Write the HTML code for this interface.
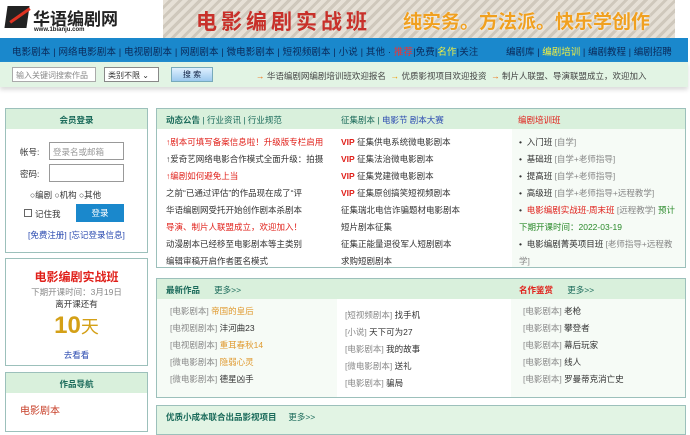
<!DOCTYPE html><html><head><meta charset="utf-8"><style>
*{margin:0;padding:0;box-sizing:border-box}
body{width:690px;height:421px;overflow:hidden;background:#fff;font-family:"Liberation Sans","Noto Sans CJK SC",sans-serif;font-size:8.5px;color:#333;position:relative}
.a{position:absolute}
.box{position:absolute;border:1px solid #9cc0bb;background:#fff}
.hd{position:absolute;left:0;right:0;top:0;height:20px;background:#d9f0dc}
.l{position:absolute;white-space:nowrap;font-size:8.5px}
.r{color:#e0201a}.g{color:#888}.o{color:#e09a30}.gr{color:#2a8a2a}.b{color:#2a4ab0}.t{color:#1a6a5a}
</style></head><body>
<div class="a" style="left:0;top:0;width:163px;height:38px;background:#fff">
<div class="a" style="left:6px;top:6px;width:22px;height:22px;background:#222;transform:skewX(-8deg)"></div>
<div class="a" style="left:8px;top:14px;width:24px;height:3px;background:#d32;transform:rotate(-35deg)"></div>
<div class="l" style="left:33px;top:5px;font-size:17px;font-weight:bold;color:#222">华语编剧网</div>
<div class="l" style="left:34px;top:27px;font-size:6px;font-weight:bold;color:#222">www.1bianju.com</div>
</div>
<div class="a" style="left:163px;top:0;width:512px;height:38px;background:repeating-linear-gradient(135deg,#e6e0d6 0 4px,#cfc8bc 4px 7px)"></div>
<div class="l" style="left:196px;top:6px;font-size:21px;font-weight:bold;color:#c8302a;letter-spacing:4px">电影编剧实战班</div>
<div class="l" style="left:403px;top:7px;font-size:19px;font-weight:bold;color:#f0a020;text-shadow:0 0 2px #fff">纯实务。方法派。快乐学创作</div>
<div class="a" style="left:0;top:38px;width:688px;height:24px;background:#1a88cc"></div>
<div class="l" style="left:12px;top:44px;font-size:9.5px;color:#0a2a5a;letter-spacing:0.1px">电影剧本 | 网络电影剧本 | 电视剧剧本 | 网剧剧本 | 微电影剧本 | 短视频剧本 | 小说 | 其他 · <span style="color:#e33">推荐</span>|免费|<span style="color:#ee4">名作</span>|关注</div>
<div class="l" style="left:506px;top:44px;font-size:9.5px;color:#0a2a5a">编剧库 | <span style="color:#ee4">编剧培训</span> | 编剧教程 | 编剧招聘</div>
<div class="a" style="left:0;top:62px;width:688px;height:25px;background:#e2f4e4;box-shadow:0 3px 4px #ddd"></div>
<div class="a" style="left:12px;top:67px;width:84px;height:15px;border:1px solid #aaa;background:#fff;color:#888;padding:2px 3px;font-size:8px;white-space:nowrap">输入关键词搜索作品</div>
<div class="a" style="left:104px;top:67px;width:55px;height:15px;border:1px solid #888;background:#fff;padding:2px 3px;font-size:8px;white-space:nowrap">类别不限 ⌄</div>
<div class="a" style="left:171px;top:67px;width:42px;height:15px;border:1px solid #7ab;background:linear-gradient(#dfefff,#9cc8ee);text-align:center;font-size:8px;line-height:13px;color:#124">搜 索</div>
<div class="l" style="left:256px;top:70px;font-size:8.5px;color:#444"><span style="color:#e60">→</span> 华语编剧网编剧培训班欢迎报名 &nbsp;<span style="color:#e90">→</span> 优质影视项目欢迎投资 &nbsp;<span style="color:#e60">→</span> 制片人联盟、导演联盟成立，欢迎加入</div>

<div class="box" style="left:5px;top:108px;width:143px;height:145px"><div class="hd"></div>
<div class="l t" style="left:0;right:0;top:5px;text-align:center;font-weight:bold">会员登录</div>
<div class="l" style="left:14px;top:37px">帐号:</div>
<div class="a" style="left:43px;top:33px;width:75px;height:18px;border:1px solid #999;padding:3px;color:#999;white-space:nowrap">登录名或邮箱</div>
<div class="l" style="left:14px;top:59px">密码:</div>
<div class="a" style="left:43px;top:55px;width:75px;height:18px;border:1px solid #999"></div>
<div class="l" style="left:24px;top:80px">○编剧 ○机构 ○其他</div>
<div class="a" style="left:18px;top:100px;width:8px;height:8px;border:1px solid #666"></div>
<div class="l" style="left:29px;top:99px">记住我</div>
<div class="a" style="left:70px;top:95px;width:48px;height:18px;background:#1a88cc;color:#fff;text-align:center;line-height:18px">登录</div>
<div class="l b" style="left:22px;top:120px">[免费注册] [忘记登录信息]</div>
</div>
<div class="box" style="left:5px;top:258px;width:143px;height:108px">
<div class="l r" style="left:0;right:0;top:9px;text-align:center;font-size:12px;font-weight:bold">电影编剧实战班</div>
<div class="l g" style="left:0;right:0;top:27px;text-align:center">下期开课时间：3月19日</div>
<div class="l" style="left:0;right:0;top:39px;text-align:center">离开课还有</div>
<div class="l" style="left:0;right:0;top:53px;text-align:center;font-size:24px;font-weight:bold;color:#d4a017">10<span style="font-weight:normal;font-size:18px">天</span></div>
<div class="l b" style="left:0;right:0;top:90px;text-align:center">去看看</div>
</div>
<div class="box" style="left:5px;top:372px;width:143px;height:60px"><div class="hd"></div>
<div class="l t" style="left:0;right:0;top:5px;text-align:center;font-weight:bold">作品导航</div>
<div class="l" style="left:14px;top:29px;color:#c8402a;font-size:10px">电影剧本</div></div>

<div class="box" style="left:156px;top:108px;width:530px;height:160px"><div class="hd"></div>
<div class="a" style="left:178px;top:20px;width:176px;bottom:0;background:#fff"></div>
<div class="a" style="left:355px;top:20px;right:0;bottom:0;background:#f6fbf6"></div>
<div class="l t" style="left:9px;top:5px"><b>动态公告</b> | 行业资讯 | 行业规范</div>
<div class="l t" style="left:184px;top:5px">征集剧本 | <span class="b">电影节 剧本大赛</span></div>
<div class="l r" style="left:361px;top:5px">编剧培训班</div>
<div style="position:absolute;left:9px;top:25px;line-height:17px;white-space:nowrap">
<div class="r">↑剧本可填写备案信息啦！升级版专栏启用</div><div>↑爱奇艺网络电影合作模式全面升级：拍摄</div><div class="r">↑编剧如何避免上当</div><div>之前“已通过评估”的作品现在成了“评</div><div>华语编剧网受托开始创作剧本杀剧本</div><div class="r">导演、制片人联盟成立，欢迎加入！</div><div>动漫剧本已经移至电影剧本等主类别</div><div>编辑审稿开启作者匿名模式</div></div>
<div style="position:absolute;left:184px;top:25px;line-height:17px;white-space:nowrap">
<div><b class="r">VIP</b> 征集供电系统微电影剧本</div><div><b class="r">VIP</b> 征集法治微电影剧本</div><div><b class="r">VIP</b> 征集党建微电影剧本</div><div><b class="r">VIP</b> 征集原创搞笑短视频剧本</div><div>征集瑞北电信诈骗题材电影剧本</div><div>短片剧本征集</div><div>征集正能量退役军人短剧剧本</div><div>求购短剧剧本</div></div>
<div style="position:absolute;left:362px;top:25px;line-height:17px;width:165px">
<div>• &nbsp;入门班 <span class="g">[自学]</span></div><div>• &nbsp;基础班 <span class="g">[自学+老师指导]</span></div><div>• &nbsp;提高班 <span class="g">[自学+老师指导]</span></div><div>• &nbsp;高级班 <span class="g">[自学+老师指导+远程教学]</span></div><div style="white-space:nowrap">• &nbsp;<span class="r">电影编剧实战班-周末班</span> <span class="g">[远程教学]</span> <span class="gr">预计</span></div><div class="gr">下期开课时间：2022-03-19</div><div style="white-space:nowrap">• &nbsp;电影编剧菁英项目班 <span class="g">[老师指导+远程教</span></div><div class="g">学]</div></div>
</div>

<div class="box" style="left:156px;top:278px;width:530px;height:120px;background:#f6fbf6"><div class="hd"></div>
<div class="a" style="left:180px;top:20px;width:174px;bottom:0;background:#fff"></div>
<div class="l t" style="left:9px;top:5px"><b>最新作品</b> &nbsp; &nbsp; &nbsp;更多&gt;&gt;</div>
<div class="l" style="left:362px;top:5px"><b class="r">名作鉴赏</b> &nbsp; &nbsp; &nbsp;<span class="t">更多&gt;&gt;</span></div>
<div style="position:absolute;left:13px;top:24px;line-height:17px">
<div><span class="g">[电影剧本]</span> <span class="o">帝国的皇后</span></div><div><span class="g">[电视剧剧本]</span> 沣河曲23</div><div><span class="g">[电视剧剧本]</span> <span class="o">重耳春秋14</span></div><div><span class="g">[微电影剧本]</span> <span class="o">隐弱心灵</span></div><div><span class="g">[微电影剧本]</span> 德星凶手</div></div>
<div style="position:absolute;left:188px;top:28px;line-height:17px">
<div><span class="g">[短视频剧本]</span> 找手机</div><div><span class="g">[小说]</span> 天下可为27</div><div><span class="g">[电影剧本]</span> 我的故事</div><div><span class="g">[微电影剧本]</span> 送礼</div><div><span class="g">[电影剧本]</span> 骗局</div></div>
<div style="position:absolute;left:366px;top:24px;line-height:17px">
<div><span class="g">[电影剧本]</span> 老枪</div><div><span class="g">[电影剧本]</span> 攀登者</div><div><span class="g">[电影剧本]</span> 幕后玩家</div><div><span class="g">[电影剧本]</span> 线人</div><div><span class="g">[电影剧本]</span> 罗曼蒂克消亡史</div></div>
</div>
<div class="box" style="left:156px;top:405px;width:530px;height:30px;background:#e2f4e4">
<div class="l t" style="left:9px;top:5px"><b>优质小成本联合出品影视项目</b> &nbsp; &nbsp; 更多&gt;&gt;</div></div>
</body></html>
